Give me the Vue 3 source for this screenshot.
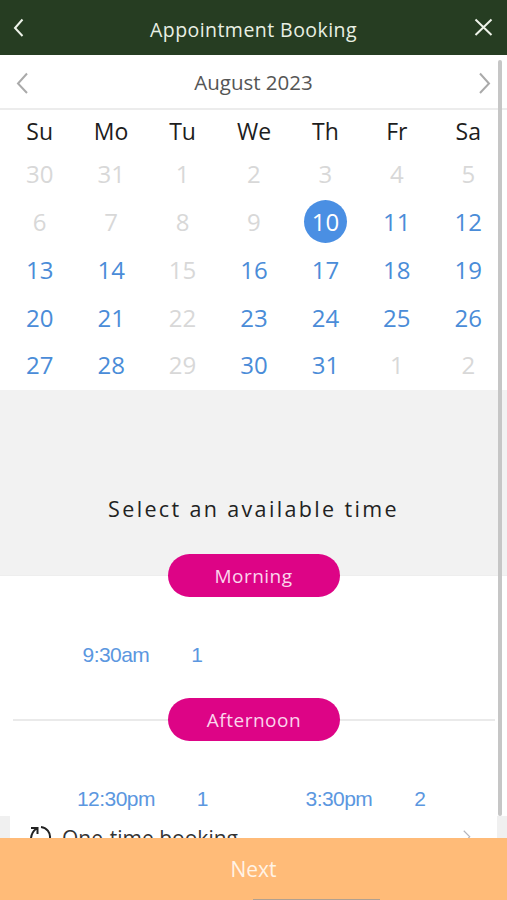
<script setup>
const weekdays = ['Su', 'Mo', 'Tu', 'We', 'Th', 'Fr', 'Sa']
const muted = new Set(['30a', '31a', '1a', '2a', '3a', '4a', '5a', '6', '7', '8', '9', '15', '22', '29', '1b', '2b'])
const keys = ['30a', '31a', '1a', '2a', '3a', '4a', '5a', '6', '7', '8', '9', '10', '11', '12', '13', '14', '15', '16', '17', '18', '19', '20', '21', '22', '23', '24', '25', '26', '27', '28', '29', '30', '31', '1b', '2b']
const days = keys.map((key) => ({
  key,
  label: key.replace(/[ab]/, ''),
  muted: muted.has(key),
  selected: key === '10',
}))
const morning = [{ time: '9:30am', count: 1 }]
const afternoon = [
  { time: '12:30pm', count: 1 },
  { time: '3:30pm', count: 2 },
]
</script>

<template>
  <div class="page">
    <header class="topbar">
      <svg class="top-icon" viewBox="0 0 24 24" width="24" height="24">
        <path d="M13.5 4.5 6 13l7.5 8" />
      </svg>
      <h1 class="title">Appointment Booking</h1>
      <svg class="top-icon" viewBox="0 0 24 24" width="24" height="24">
        <path d="M1.5 4.5 17.5 20M17.5 4.5 1.5 20" />
      </svg>
    </header>

    <main class="body">
      <div class="scrollbar"></div>

      <div class="month">
        <svg class="month-icon" viewBox="0 0 24 24" width="24" height="24">
          <path d="M16 3.5 7 13.5l9 9.5" />
        </svg>
        <span>August 2023</span>
        <svg class="month-icon" viewBox="0 0 24 24" width="24" height="24">
          <path d="M8 3.5l9 10-9 9.5" />
        </svg>
      </div>

      <div class="weekdays">
        <span v-for="day in weekdays" :key="day">{{ day }}</span>
      </div>

      <div class="dates">
        <div v-for="day in days" :key="day.key" class="date">
          <span :class="{ muted: day.muted, selected: day.selected }">{{ day.label }}</span>
        </div>
      </div>

      <section class="prompt">Select an available time</section>

      <section class="slots">
        <div class="period period-first"><span class="pill">Morning</span></div>
        <div class="slot-row">
          <div v-for="slot in morning" :key="slot.time" class="slot">
            <span>{{ slot.time }}</span>
            <span>{{ slot.count }}</span>
          </div>
        </div>
        <div class="period period-line"><span class="pill">Afternoon</span></div>
        <div class="slot-row">
          <div v-for="slot in afternoon" :key="slot.time" class="slot">
            <span>{{ slot.time }}</span>
            <span>{{ slot.count }}</span>
          </div>
        </div>
      </section>

      <div class="recurrence">
        <div class="recurrence-card">
          <svg class="repeat" viewBox="0 0 24 24" width="24" height="24">
            <path d="M3 15C3 11 5 7 9 4M3 4h6.5v6M13 3a10 10 0 0 1 9 11" />
          </svg>
          <span class="recurrence-label">One-time booking</span>
          <svg class="recurrence-arrow" viewBox="0 0 24 24" width="18" height="24">
            <path d="M5 5l8 8-8 8" />
          </svg>
        </div>
      </div>
    </main>

    <footer class="next">Next</footer>
    <div class="home-indicator"></div>
  </div>
</template>

<style scoped>
.page {
  position: relative;
  width: 507px;
  height: 900px;
  display: flex;
  flex-direction: column;
  overflow: hidden;
  background: #fff;
  font-family: "Open Sans", "Noto Sans", sans-serif;
}

.topbar {
  height: 55px;
  flex: none;
  display: flex;
  align-items: center;
  justify-content: space-between;
  padding: 0 9px 2px;
  box-sizing: border-box;
  background: #263d22;
}

.title {
  margin: 0;
  padding-top: 5px;
  font-size: 19.5px;
  font-weight: 400;
  letter-spacing: 0.45px;
  color: #e9f0e4;
}

.top-icon path {
  fill: none;
  stroke: #eef3ea;
  stroke-width: 2;
}

.body {
  position: relative;
  flex: 1;
  min-height: 0;
  display: flex;
  flex-direction: column;
  overflow: hidden;
}

.scrollbar {
  position: absolute;
  top: 5px;
  right: 5px;
  width: 4px;
  height: 756px;
  z-index: 2;
  border-radius: 2px;
  background: #c6c6c6;
}

.month {
  height: 55px;
  flex: none;
  display: flex;
  align-items: center;
  justify-content: space-between;
  padding: 0 11px;
  box-sizing: border-box;
  border-bottom: 2px solid #ececec;
  font-size: 20.5px;
  color: #555;
}

.month-icon path {
  fill: none;
  stroke: #aaa;
  stroke-width: 2;
}

.weekdays,
.dates {
  display: grid;
  grid-template-columns: repeat(7, 71.43px);
  padding-left: 4px;
}

.weekdays {
  height: 40px;
  box-sizing: border-box;
  padding-top: 1px;
  align-items: center;
  font-size: 23px;
  color: #1d1d1d;
  text-align: center;
}

.dates {
  grid-auto-rows: 47.75px;
  height: 240px;
  font-size: 24px;
  color: #4a8cd8;
}

.date {
  display: flex;
  align-items: center;
  justify-content: center;
}

.date .muted {
  color: #d8d8d8;
}

.date .selected {
  width: 43px;
  height: 43px;
  display: flex;
  align-items: center;
  justify-content: center;
  border-radius: 50%;
  background: #4a8fe3;
  color: #fff;
}

.prompt {
  height: 186px;
  flex: none;
  box-sizing: border-box;
  padding-top: 103px;
  background: #f2f2f2;
  border-bottom: 1px solid #eee;
  font-size: 21.5px;
  line-height: 32px;
  letter-spacing: 2.35px;
  text-align: center;
  color: #222;
}

.slots {
  height: 240px;
  flex: none;
}

.period {
  display: flex;
  justify-content: center;
}

.period-first {
  margin-top: -22px;
}

.period-line {
  margin: 0 12px 0 13px;
  background: linear-gradient(#eaeaea, #eaeaea) center / 100% 2px no-repeat;
}

.pill {
  width: 172px;
  height: 43px;
  display: flex;
  align-items: center;
  justify-content: center;
  border-radius: 22px;
  background: #dd0486;
  color: #fbd5ec;
  font-size: 19px;
  letter-spacing: 0.5px;
  position: relative;
}

.slot-row {
  display: grid;
  grid-template-columns: repeat(2, 223px);
  height: 101px;
  padding-left: 31px;
  padding-top: 14px;
  box-sizing: border-box;
  align-items: center;
  font-family: "Liberation Sans", Arial, sans-serif;
  font-size: 21px;
  letter-spacing: -0.55px;
  color: #5b97e0;
}

.slot {
  display: flex;
  justify-content: center;
  gap: 42px;
}

.recurrence {
  flex: none;
  height: 22px;
  display: flex;
  background: #f0f0f0;
  padding: 0 10px;
  overflow: hidden;
}

.recurrence-card {
  flex: 1;
  display: flex;
  align-items: flex-start;
  padding: 8px 19px 0 18px;
  background: #fff;
}

.repeat {
  flex: none;
  width: 24px;
}

.repeat path {
  fill: none;
  stroke: #222;
  stroke-width: 2;
}

.recurrence-label {
  margin-left: 10px;
  font-size: 21px;
  line-height: 28px;
  color: #333;
}

.recurrence-arrow {
  margin-left: auto;
}

.recurrence-arrow path {
  fill: none;
  stroke: #b4b4bc;
  stroke-width: 1.5;
}

.next {
  height: 62px;
  flex: none;
  display: flex;
  align-items: center;
  justify-content: center;
  background: #ffbb78;
  color: #fff3e6;
  font-size: 21px;
}

.home-indicator {
  position: absolute;
  left: 253px;
  bottom: 0;
  width: 127px;
  height: 1px;
  background: #b0a090;
}
</style>
